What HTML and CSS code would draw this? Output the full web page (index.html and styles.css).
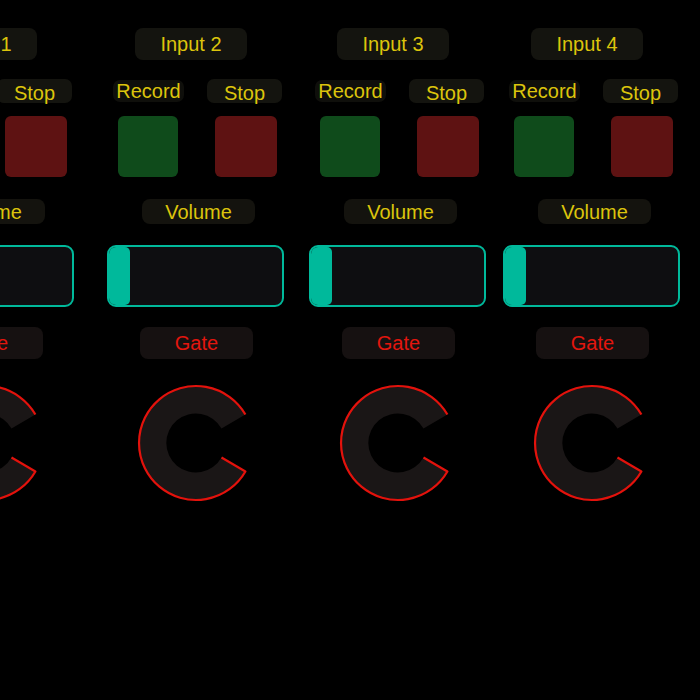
FILE: index.html
```html
<!DOCTYPE html>
<html>
<head>
<meta charset="utf-8">
<link rel="stylesheet" href="styles.css">
</head>
<body>
<main class="mixer">
  <section class="channel ch1">
    <div class="box title">Input 1</div>
    <div class="labels"><span class="lbl rec">Record</span><span class="lbl stop">Stop</span></div>
    <div class="pads"><div class="pad pad-rec"></div><div class="pad pad-stop"></div></div>
    <div class="box vol">Volume</div>
    <div class="fader"><div class="thumb"></div></div>
    <div class="box gate">Gate</div>
    <svg class="knob" viewBox="0 0 118 118" width="118" height="118">
      <path class="knob-body" d="M108.4 30.5 A57 57 0 1 0 108.4 87.5 L84.5 73.5 A29.5 29.5 0 1 1 84.5 44.5 Z"/>
      <path class="knob-ring" d="M108.4 30.5 A57 57 0 1 0 108.4 87.5 L84.5 73.5"/>
    </svg>
  </section>
  <section class="channel ch2">
    <div class="box title">Input 2</div>
    <div class="labels"><span class="lbl rec">Record</span><span class="lbl stop">Stop</span></div>
    <div class="pads"><div class="pad pad-rec"></div><div class="pad pad-stop"></div></div>
    <div class="box vol">Volume</div>
    <div class="fader"><div class="thumb"></div></div>
    <div class="box gate">Gate</div>
    <svg class="knob" viewBox="0 0 118 118" width="118" height="118">
      <path class="knob-body" d="M108.4 30.5 A57 57 0 1 0 108.4 87.5 L84.5 73.5 A29.5 29.5 0 1 1 84.5 44.5 Z"/>
      <path class="knob-ring" d="M108.4 30.5 A57 57 0 1 0 108.4 87.5 L84.5 73.5"/>
    </svg>
  </section>
  <section class="channel ch3">
    <div class="box title">Input 3</div>
    <div class="labels"><span class="lbl rec">Record</span><span class="lbl stop">Stop</span></div>
    <div class="pads"><div class="pad pad-rec"></div><div class="pad pad-stop"></div></div>
    <div class="box vol">Volume</div>
    <div class="fader"><div class="thumb"></div></div>
    <div class="box gate">Gate</div>
    <svg class="knob" viewBox="0 0 118 118" width="118" height="118">
      <path class="knob-body" d="M108.4 30.5 A57 57 0 1 0 108.4 87.5 L84.5 73.5 A29.5 29.5 0 1 1 84.5 44.5 Z"/>
      <path class="knob-ring" d="M108.4 30.5 A57 57 0 1 0 108.4 87.5 L84.5 73.5"/>
    </svg>
  </section>
  <section class="channel ch4">
    <div class="box title">Input 4</div>
    <div class="labels"><span class="lbl rec">Record</span><span class="lbl stop">Stop</span></div>
    <div class="pads"><div class="pad pad-rec"></div><div class="pad pad-stop"></div></div>
    <div class="box vol">Volume</div>
    <div class="fader"><div class="thumb"></div></div>
    <div class="box gate">Gate</div>
    <svg class="knob" viewBox="0 0 118 118" width="118" height="118">
      <path class="knob-body" d="M108.4 30.5 A57 57 0 1 0 108.4 87.5 L84.5 73.5 A29.5 29.5 0 1 1 84.5 44.5 Z"/>
      <path class="knob-ring" d="M108.4 30.5 A57 57 0 1 0 108.4 87.5 L84.5 73.5"/>
    </svg>
  </section>
</main>
</body>
</html>
```

FILE: styles.css
```css
html, body {
  margin: 0;
  padding: 0;
  background: #000;
  height: 100%;
  overflow: hidden;
}

body {
  font-family: "Liberation Sans", Arial, sans-serif;
  font-size: 20px;
  color: #dcc40c;
}

.mixer {
  display: flex;
  align-items: flex-start;
  padding-top: 28px;
  width: 1000px;
}

.channel {
  flex: 0 0 177px;
  width: 177px;
  display: flex;
  flex-direction: column;
  align-items: flex-start;
}

.ch1 { margin-left: -103px; }
.ch2 { margin-left: 33px; }
.ch3 { margin-left: 25px; }
.ch4 { margin-left: 17px; }

.box {
  display: flex;
  align-items: center;
  justify-content: center;
  border-radius: 8px;
  line-height: 1;
}

.title {
  margin-left: 28px;
  width: 112px;
  height: 32px;
  background: #14140f;
}

.labels {
  display: flex;
  align-items: center;
  margin-top: 19px;
  height: 24px;
}

.lbl {
  display: flex;
  align-items: center;
  justify-content: center;
  border-radius: 7px;
  line-height: 1;
}

.rec {
  margin-left: 6px;
  width: 71px;
  height: 22px;
  background: #0f0f0b;
  padding-bottom: 1px;
  box-sizing: border-box;
}

.stop {
  margin-left: 23px;
  width: 75px;
  height: 24px;
  background: #14140f;
  padding-top: 3px;
  box-sizing: border-box;
}

.pads {
  display: flex;
  margin-top: 13px;
}

.pad {
  height: 61px;
  border-radius: 6px;
}

.pad-rec {
  margin-left: 11px;
  width: 60px;
  background: #0f4b1b;
}

.pad-stop {
  margin-left: 37px;
  width: 62px;
  background: #5e1212;
}

.vol {
  margin-top: 22px;
  margin-left: 35px;
  width: 113px;
  height: 25px;
  background: #14130e;
}

.fader {
  margin-top: 21px;
  width: 177px;
  height: 62px;
  box-sizing: border-box;
  border: 2px solid #00b99b;
  border-radius: 9px;
  background: #0e0e11;
  overflow: hidden;
  display: flex;
}

.thumb {
  width: 21px;
  height: 100%;
  background: #00b99b;
  border-radius: 0 5px 5px 0;
}

.gate {
  margin-top: 20px;
  margin-left: 33px;
  width: 113px;
  height: 32px;
  background: #161111;
  color: #e3160e;
}

.knob {
  display: block;
  margin-top: 25px;
  margin-left: 30px;
}

.knob-body {
  fill: #1a1616;
}

.knob-ring {
  fill: none;
  stroke: #e3120c;
  stroke-width: 2.2;
  stroke-linejoin: round;
}
```
